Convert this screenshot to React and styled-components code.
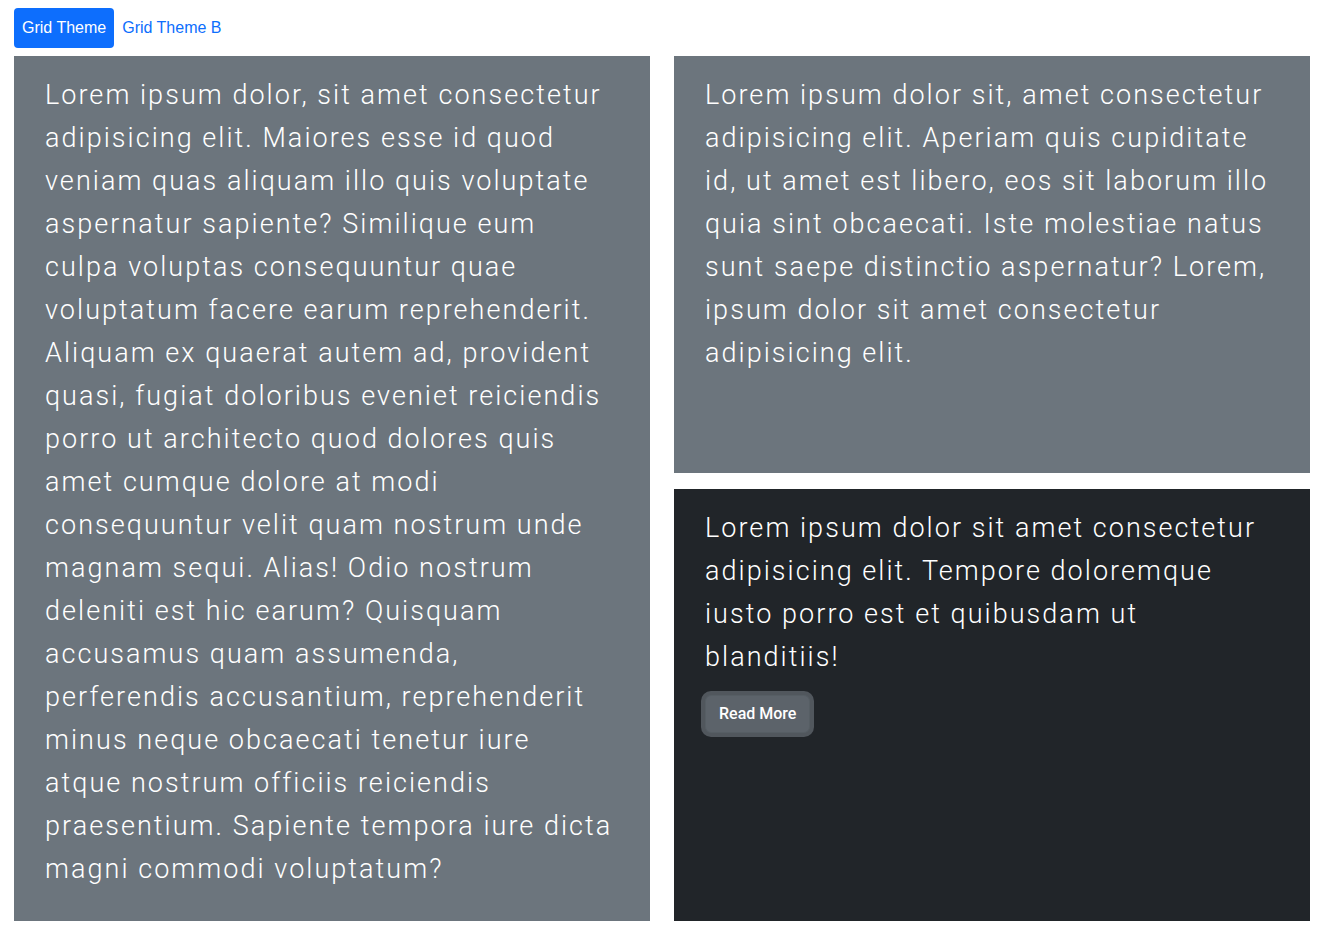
import React, {useState} from "react";
import styled, {createGlobalStyle} from "styled-components";

const GlobalStyle = createGlobalStyle`
  * { box-sizing: border-box; }
  body {
    margin: 0;
    background: #fff;
    font-family: "Liberation Sans", Arial, sans-serif;
  }
`

const Page = styled.div`
  padding: 8px 19px 20px 14px;
`

const Tabs = styled.nav`
  display: flex;
  margin-bottom: 8px;
`

const Tab = styled.button`
  border: 0;
  border-radius: 4px;
  padding: 8px 8px;
  font-family: "Liberation Sans", Arial, sans-serif;
  font-size: 16px;
  line-height: 24px;
  cursor: pointer;
  background: ${p => p.$active ? "#0d6efd" : "transparent"};
  color: ${p => p.$active ? "#fff" : "#0d6efd"};
`

const Grid = styled.div`
  display: grid;
  grid-template-columns: 1fr 1fr;
  grid-template-rows: 417fr 432fr;
  column-gap: 24px;
  row-gap: 16px;
`

const Card = styled.div`
  padding: 18px 36px 14px 31px;
  background: ${p => p.$dark ? "#212529" : "#6c757d"};
  color: #fff;
  grid-row: ${p => p.$tall ? "span 2" : "auto"};

  & p {
    margin: 0 0 16px;
    font-family: Roboto, "Liberation Sans", sans-serif;
    font-weight: 300;
    font-size: 27px;
    line-height: 43px;
    letter-spacing: 2.05px;
  }
`

const ReadMore = styled.button`
  padding: 6px 13px;
  border: 1px solid #565e64;
  border-radius: 6px;
  background: #5c636a;
  color: #fff;
  font-family: Roboto, "Liberation Sans", sans-serif;
  font-weight: 500;
  font-size: 16px;
  line-height: 24px;
  box-shadow: 0 0 0 4px rgba(130, 138, 145, 0.5);
  cursor: pointer;
`

const tabs = ["Grid Theme", "Grid Theme B"]

const App = () => {
  const [active, setActive] = useState(0)

  return (
    <Page>
      <GlobalStyle/>
      <Tabs>
        {tabs.map((t, i) => (
          <Tab key={t} $active={i === active} onClick={() => setActive(i)}>{t}</Tab>
        ))}
      </Tabs>
      <Grid>
        <Card $tall>
          <p>
            Lorem ipsum dolor, sit amet consectetur adipisicing elit. Maiores esse id quod veniam quas aliquam illo
            quis voluptate aspernatur sapiente? Similique eum culpa voluptas consequuntur quae voluptatum facere earum
            reprehenderit. Aliquam ex quaerat autem ad, provident quasi, fugiat doloribus eveniet reiciendis porro ut
            architecto quod dolores quis amet cumque dolore at modi consequuntur velit quam nostrum unde magnam sequi.
            Alias! Odio nostrum deleniti est hic earum? Quisquam accusamus quam assumenda, perferendis accusantium,
            reprehenderit minus neque obcaecati tenetur iure atque nostrum officiis reiciendis praesentium. Sapiente
            tempora iure dicta magni commodi voluptatum?
          </p>
        </Card>
        <Card>
          <p>
            Lorem ipsum dolor sit, amet consectetur adipisicing elit. Aperiam quis cupiditate id, ut amet est libero,
            eos sit laborum illo quia sint obcaecati. Iste molestiae natus sunt saepe distinctio aspernatur? Lorem,
            ipsum dolor sit amet consectetur adipisicing elit.
          </p>
        </Card>
        <Card $dark>
          <p>
            Lorem ipsum dolor sit amet consectetur adipisicing elit. Tempore doloremque iusto porro est et quibusdam
            ut blanditiis!
          </p>
          <ReadMore>Read More</ReadMore>
        </Card>
      </Grid>
    </Page>
  )
}

export default App
